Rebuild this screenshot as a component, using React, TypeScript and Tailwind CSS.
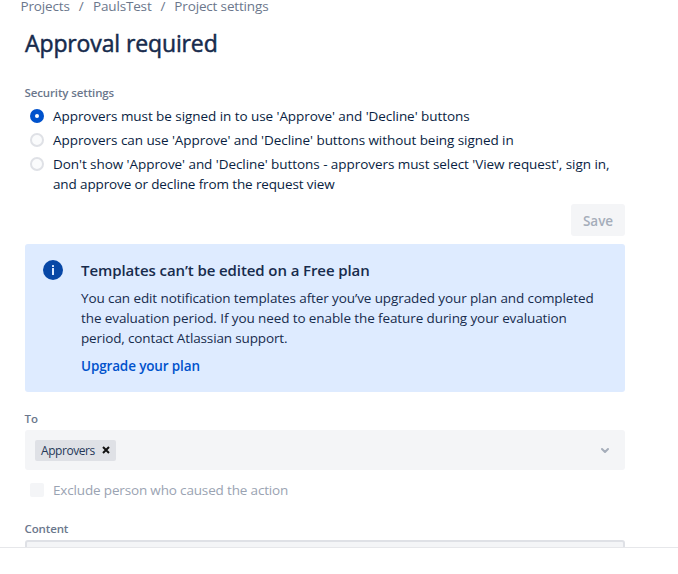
import React from 'react';

function Radio({ checked = false }: { checked?: boolean }) {
  return checked ? (
    <span className="mt-[3px] flex size-[14px] shrink-0 items-center justify-center rounded-full bg-[#0052cc]">
      <span className="size-1 rounded-full bg-white" />
    </span>
  ) : (
    <span className="mt-[3px] size-[14px] shrink-0 rounded-full border-2 border-[#dfe1e6] bg-[#fafbfc]" />
  );
}

function Option({ checked, children }: { checked?: boolean; children: React.ReactNode }) {
  return (
    <label className="flex gap-[9px] pl-[5px]">
      <Radio checked={checked} />
      <span className="tracking-[-0.06px] text-[#091e42]">{children}</span>
    </label>
  );
}

function Label({ children }: { children: React.ReactNode }) {
  return (
    <div className="-ml-[0.5px] text-[11.5px] leading-4 font-semibold tracking-[-0.12px] text-[#6b778c]">{children}</div>
  );
}

export default function App() {
  return (
    <div className="h-[574px] w-[678px] overflow-hidden bg-white font-['Open_Sans','Noto_Sans',sans-serif] text-[13.5px] leading-5 whitespace-nowrap">
      <main className="h-[548px] overflow-hidden border-b border-[#e6e7ea] pl-[25px]">
        <nav className="-ml-[4.5px] flex h-4 gap-[9px] leading-[12px] tracking-[-0.16px] text-[#6b778c]">
          <span>Projects</span>
          <span>/</span>
          <span className="ml-[0.5px]">PaulsTest</span>
          <span>/</span>
          <span>Project settings</span>
        </nav>
        <h1 className="mt-[13px] text-[23px] leading-7 font-normal tracking-[-0.12px] text-[#172b4d] [-webkit-text-stroke:0.5px_#172b4d]">
          Approval required
        </h1>
        <div className="w-[600px] pt-[28px]">
          <Label>Security settings</Label>
          <div className="mt-[5px] flex flex-col gap-1">
            <Option checked>Approvers must be signed in to use 'Approve' and 'Decline' buttons</Option>
            <Option>Approvers can use 'Approve' and 'Decline' buttons without being signed in</Option>
            <Option>
              Don't show 'Approve' and 'Decline' buttons - approvers must select 'View request', sign in,
              <br />
              <span className="tracking-[-0.13px]">and approve or decline from the request view</span>
            </Option>
          </div>
          <div className="mt-[10px] flex justify-end">
            <button className="h-8 w-[54px] rounded-[3px] bg-[#f4f5f7] pt-px font-semibold text-[#a5adba]">Save</button>
          </div>
          <section className="mt-2 flex h-[148px] gap-[18px] rounded-[3px] bg-[#deebff] pt-4 pl-[18px] text-[#172b4d]">
            <svg className="size-5 shrink-0" viewBox="0 0 20 20">
              <circle cx="10" cy="10" r="10" fill="#0747a6" />
              <rect x="9" y="5" width="2" height="2" rx="0.5" fill="#deebff" />
              <rect x="9" y="8" width="2" height="7" rx="0.3" fill="#deebff" />
            </svg>
            <div>
              <h2 className="text-[15px] leading-5 font-semibold tracking-[-0.09px]">
                Templates can’t be edited on a Free plan
              </h2>
              <p className="mt-2 tracking-[-0.1px]">
                You can edit notification templates after you’ve upgraded your plan and completed
                <br />
                the evaluation period. If you need to enable the feature during your evaluation
                <br />
                <span className="tracking-[-0.14px]">period, contact Atlassian support.</span>
              </p>
              <a className="mt-2 block font-semibold tracking-[-0.14px] text-[#0052cc]">Upgrade your plan</a>
            </div>
          </section>
          <div className="mt-[19px]">
            <Label>To</Label>
          </div>
          <div className="mt-[3px] flex h-10 items-center justify-between rounded-[3px] bg-[#f4f5f7] pr-4 pl-[10px]">
            <div className="mt-px flex h-[21px] w-[81px] items-center justify-between rounded-xs bg-[#dfe1e6] pr-1.5 pl-[6px] text-[12px] text-[#253858]">
              <span className="tracking-[-0.45px]">Approvers</span>
              <svg className="mb-px size-2" viewBox="0 0 8 8" stroke="#111" strokeWidth="2">
                <path d="M1 1l6 6M7 1L1 7" />
              </svg>
            </div>
            <svg className="h-2 w-2" viewBox="0 0 8 8" fill="none" stroke="#a5adba" strokeWidth="2">
              <path d="M1 3l3 3 3-3" strokeLinecap="round" strokeLinejoin="round" />
            </svg>
          </div>
          <label className="mt-[10px] flex gap-[9px] pl-[5px] text-[#9aa3b2]">
            <span className="mt-[3px] size-[14px] rounded-[2px] bg-[#f4f5f7]" />
            <span className="tracking-[-0.16px]">Exclude person who caused the action</span>
          </label>
          <div className="mt-[21px]">
            <Label>Content</Label>
          </div>
          <div className="mt-[3px] h-10 rounded-[3px] border-2 border-[#dfe1e6] bg-[#f4f5f7]" />
        </div>
      </main>
    </div>
  );
}
